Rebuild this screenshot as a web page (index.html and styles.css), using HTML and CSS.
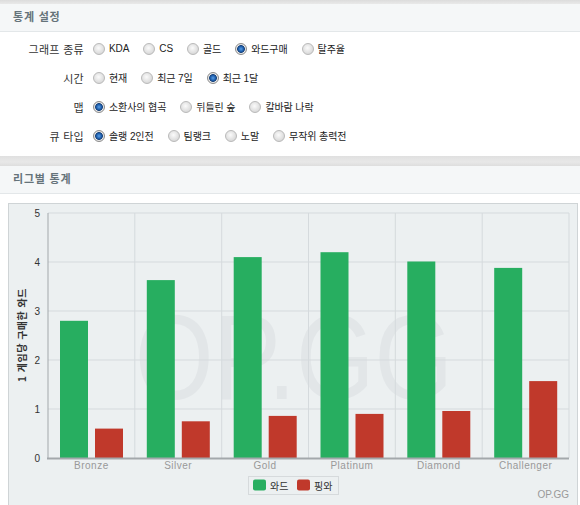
FILE: index.html
```html
<!DOCTYPE html>
<html lang="ko">
<head>
<meta charset="utf-8">
<title>통계</title>
<link rel="stylesheet" href="styles.css">
</head>
<body>
<div class="topbar"></div>
<section class="panel">
  <h2 class="panel-head">통계 설정</h2>
  <div class="settings">
    <div class="row">
      <span class="label">그래프 종류</span>
      <div class="opts">
        <label class="opt"><input type="radio" name="graph">KDA</label>
        <label class="opt"><input type="radio" name="graph">CS</label>
        <label class="opt"><input type="radio" name="graph">골드</label>
        <label class="opt"><input type="radio" name="graph" checked>와드구매</label>
        <label class="opt"><input type="radio" name="graph">탈주율</label>
      </div>
    </div>
    <div class="row">
      <span class="label">시간</span>
      <div class="opts">
        <label class="opt"><input type="radio" name="time">현재</label>
        <label class="opt"><input type="radio" name="time">최근 7일</label>
        <label class="opt"><input type="radio" name="time" checked>최근 1달</label>
      </div>
    </div>
    <div class="row">
      <span class="label">맵</span>
      <div class="opts">
        <label class="opt"><input type="radio" name="map" checked>소환사의 협곡</label>
        <label class="opt"><input type="radio" name="map">뒤틀린 숲</label>
        <label class="opt"><input type="radio" name="map">칼바람 나락</label>
      </div>
    </div>
    <div class="row">
      <span class="label">큐 타입</span>
      <div class="opts">
        <label class="opt"><input type="radio" name="queue" checked>솔랭 2인전</label>
        <label class="opt"><input type="radio" name="queue">팀랭크</label>
        <label class="opt"><input type="radio" name="queue">노말</label>
        <label class="opt"><input type="radio" name="queue">무작위 총력전</label>
      </div>
    </div>
  </div>
</section>
<div class="sep"></div>
<section class="panel">
  <h2 class="panel-head">리그별 통계</h2>
  <div class="chart">
    <svg class="chart-svg" width="568" height="308" viewBox="0 0 568 308" xmlns="http://www.w3.org/2000/svg">
      <text class="watermark" x="126" y="195" textLength="318" lengthAdjust="spacingAndGlyphs">OP.GG</text>
      <g class="grid">
        <line x1="39" y1="9" x2="560" y2="9"/>
        <line x1="39" y1="58" x2="560" y2="58"/>
        <line x1="39" y1="107" x2="560" y2="107"/>
        <line x1="39" y1="156" x2="560" y2="156"/>
        <line x1="39" y1="205" x2="560" y2="205"/>
        <line x1="125.8" y1="9" x2="125.8" y2="254"/>
        <line x1="212.7" y1="9" x2="212.7" y2="254"/>
        <line x1="299.5" y1="9" x2="299.5" y2="254"/>
        <line x1="386.3" y1="9" x2="386.3" y2="254"/>
        <line x1="473.2" y1="9" x2="473.2" y2="254"/>
        <line x1="560" y1="9" x2="560" y2="254"/>
      </g>
      <g class="bars-green">
        <rect x="51" y="116.8" width="28" height="137.2"/>
        <rect x="137.8" y="76.1" width="28" height="177.9"/>
        <rect x="224.7" y="53.1" width="28" height="200.9"/>
        <rect x="311.5" y="48.2" width="28" height="205.8"/>
        <rect x="398.3" y="57.5" width="28" height="196.5"/>
        <rect x="485.2" y="63.9" width="28" height="190.1"/>
      </g>
      <g class="bars-red">
        <rect x="86" y="224.6" width="28" height="29.4"/>
        <rect x="172.8" y="217.3" width="28" height="36.7"/>
        <rect x="259.7" y="211.9" width="28" height="42.1"/>
        <rect x="346.5" y="209.9" width="28" height="44.1"/>
        <rect x="433.3" y="207" width="28" height="47"/>
        <rect x="520.2" y="177.1" width="28" height="76.9"/>
      </g>
      <line class="axis-y" x1="39" y1="9" x2="39" y2="255"/>
      <line class="axis-x" x1="38" y1="254.5" x2="560" y2="254.5"/>
      <g class="ytick">
        <text x="31" y="258">0</text>
        <text x="31" y="209">1</text>
        <text x="31" y="160">2</text>
        <text x="31" y="111">3</text>
        <text x="31" y="62">4</text>
        <text x="31" y="13">5</text>
      </g>
      <g class="xtick">
        <text x="82.4" y="265">Bronze</text>
        <text x="169.2" y="265">Silver</text>
        <text x="256.1" y="265">Gold</text>
        <text x="342.9" y="265">Platinum</text>
        <text x="429.7" y="265">Diamond</text>
        <text x="516.6" y="265">Challenger</text>
      </g>
      <text class="ytitle" transform="translate(17,131) rotate(-90)">1 게임당 구매한 와드</text>
      <rect class="legend-box" x="239.5" y="272.5" width="90" height="18"/>
      <rect class="sw-green" x="244" y="275.5" width="13" height="11" rx="2"/>
      <text class="legend-text" x="261" y="285.5">와드</text>
      <rect class="sw-red" x="288" y="275.5" width="13" height="11" rx="2"/>
      <text class="legend-text" x="305" y="285.5">핑와</text>
      <text class="credit" x="560" y="294">OP.GG</text>
    </svg>
  </div>
</section>
</body>
</html>
```
FILE: styles.css
```css
html, body {
  margin: 0;
  padding: 0;
  background: #fff;
}
body {
  width: 580px;
  height: 505px;
  overflow: hidden;
  font-family: "Liberation Sans", "Noto Sans CJK KR", sans-serif;
  color: #333;
}
.topbar {
  height: 4px;
  background: linear-gradient(#dcdcdc, #e9e9e9);
}
.panel {
  margin: 0;
}
.panel-head {
  margin: 0;
  height: 27px;
  line-height: 27px;
  padding-left: 13px;
  background: #f5f7f8;
  border-bottom: 1px solid #e3e7e9;
  font-size: 11px;
  font-weight: bold;
  color: #65737a;
  letter-spacing: 0.8px;
}
.settings {
  padding: 2px 0 6px 0;
}
.row {
  display: flex;
  align-items: center;
  height: 29px;
}
.label {
  width: 84px;
  text-align: right;
  font-size: 11px;
  letter-spacing: 0.3px;
  color: #333;
  margin-right: 9px;
}
.opts {
  display: flex;
  align-items: center;
}
.opt {
  display: flex;
  align-items: center;
  font-size: 10px;
  color: #222;
  margin-right: 14px;
  letter-spacing: -0.1px;
}
.opt input {
  appearance: none;
  -webkit-appearance: none;
  width: 12px;
  height: 12px;
  margin: 0 4px 0 0;
  border-radius: 50%;
  border: 1px solid #b9b9b9;
  background: radial-gradient(circle at 45% 40%, #fbfbfb 0, #e6e6e6 45%, #cdcdcd 100%);
  box-sizing: border-box;
}
.opt input:checked {
  border-color: #8c8c8c;
  background: radial-gradient(circle at 50% 50%, #5aa0e6 0, #1e5fae 2.5px, #17427a 3.5px, #e9e9e9 4.3px, #d0d0d0 100%);
}
.sep {
  height: 10px;
  background: linear-gradient(#e0e0e0, #e8e8e8 60%, #dedede);
}
.chart {
  margin: 9px 2px 0 8px;
  height: 310px;
  border: 1px solid #cfd4d6;
  background: #ecf0f1;
}
.chart-svg {
  display: block;
}
.watermark {
  font-family: "Liberation Sans", sans-serif;
  font-size: 121px;
  fill: #e2e6e8;
}
.grid line {
  stroke: #d5dadd;
  stroke-width: 1;
}
.bars-green rect {
  fill: #27ae60;
}
.bars-red rect {
  fill: #c0392b;
}
.axis-y {
  stroke: #a3a8ab;
  stroke-width: 1;
}
.axis-x {
  stroke: #a3a8ab;
  stroke-width: 2;
}
.ytick text {
  font-family: "Liberation Sans", sans-serif;
  font-size: 10px;
  fill: #333;
  text-anchor: end;
}
.xtick text {
  font-family: "Liberation Sans", sans-serif;
  font-size: 10px;
  fill: #999;
  text-anchor: middle;
  letter-spacing: 0.5px;
}
.ytitle {
  font-family: "Noto Sans CJK KR", sans-serif;
  font-size: 10px;
  font-weight: bold;
  fill: #333;
  text-anchor: middle;
  letter-spacing: 0.5px;
}
.legend-box {
  fill: #ecf0f1;
  stroke: #d6dadc;
  stroke-width: 1;
}
.sw-green {
  fill: #27ae60;
}
.sw-red {
  fill: #c0392b;
}
.legend-text {
  font-family: "Noto Sans CJK KR", sans-serif;
  font-size: 10px;
  fill: #333;
}
.credit {
  font-family: "Liberation Sans", sans-serif;
  font-size: 10px;
  fill: #999;
  text-anchor: end;
}
```
